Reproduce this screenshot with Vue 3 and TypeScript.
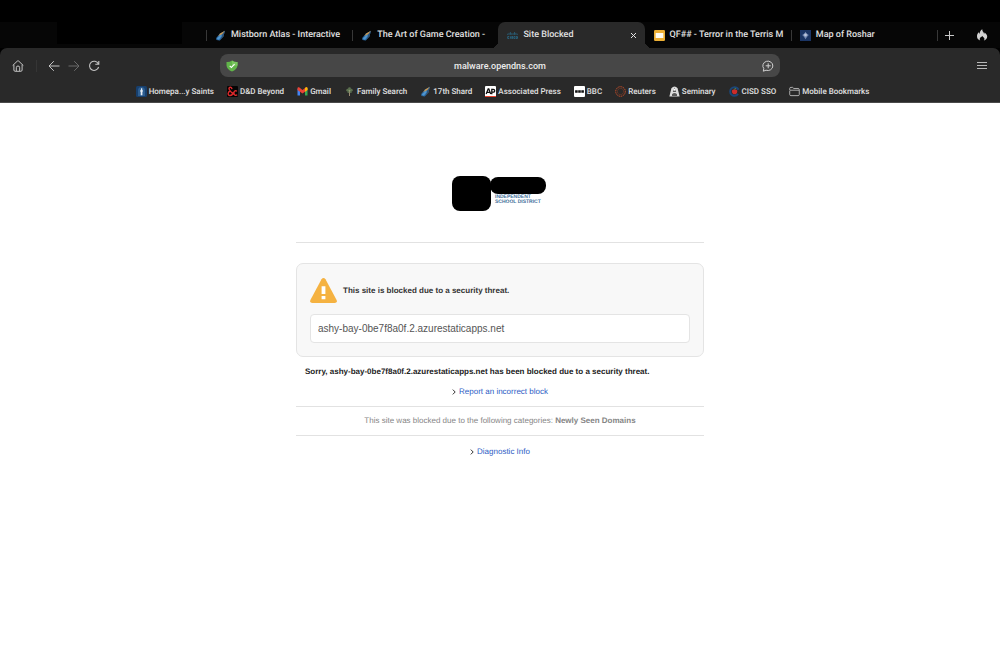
<script setup lang="ts">
interface Tab {
  title: string
  icon: string
  active?: boolean
}
interface Bookmark {
  label: string
  icon: string
}

const tabs: Tab[] = [
  { title: 'Mistborn Atlas - Interactive', icon: 'shard' },
  { title: 'The Art of Game Creation -', icon: 'shard' },
  { title: 'Site Blocked', icon: 'cisco', active: true },
  { title: 'QF## - Terror in the Terris M', icon: 'slides' },
  { title: 'Map of Roshar', icon: 'map' },
]

const bookmarks: Bookmark[] = [
  { label: 'Homepa...y Saints', icon: 'saints' },
  { label: 'D&D Beyond', icon: 'dnd' },
  { label: 'Gmail', icon: 'gmail' },
  { label: 'Family Search', icon: 'tree' },
  { label: '17th Shard', icon: 'shard' },
  { label: 'Associated Press', icon: 'ap' },
  { label: 'BBC', icon: 'bbc' },
  { label: 'Reuters', icon: 'reuters' },
  { label: 'Seminary', icon: 'seminary' },
  { label: 'CISD SSO', icon: 'cisd' },
  { label: 'Mobile Bookmarks', icon: 'folder' },
]

const domain = 'ashy-bay-0be7f8a0f.2.azurestaticapps.net'
</script>

<template>
  <div class="browser">
    <svg class="defs" width="0" height="0" aria-hidden="true">
      <symbol id="i-shard" viewBox="0 0 11 11">
        <path d="M10 .8 5 3.600 1.200 8 1.400 10 4.800 10.500 8.400 6.600Z" fill="#2d6ca6" />
        <path d="M10 .8 5.200 3.500 3.200 6.200 7 4.200Z" fill="#d99a45" />
        <path d="M10 .8 7.600 4.500 5.400 9.800 8.400 6.600Z" fill="#31506f" />
        <path d="M6 4.600 1.800 8.600 3.800 9.800 6.800 6Z" fill="#4f96d0" />
      </symbol>
      <symbol id="i-cisco" viewBox="0 0 12 11">
        <path d="M.7 3.600v1.200M2.200 2.600v2.200M3.700 1.800v3M5.200 3v1.800M6.700 3v1.800M8.200 1.800v3M9.700 2.600v2.200M11.200 3.600v1.200" stroke="#2b6f8e" stroke-width=".8" />
        <path d="M2.400 6.700H.8v2h1.600M3.700 6.400v2.600M6.600 6.700H5.100v1h1.200v1H4.800M9 6.700H7.500v2H9M9.900 6.700h1.500v2H9.900z" fill="none" stroke="#2b6f8e" stroke-width=".9" />
      </symbol>
      <symbol id="i-slides" viewBox="0 0 11 11">
        <rect width="11" height="11" rx="1.2" fill="#edb035" />
        <rect x="1.7" y="3" width="7.6" height="5" fill="#fffdf3" />
      </symbol>
      <symbol id="i-map" viewBox="0 0 11 11">
        <rect width="11" height="11" fill="#1b3565" />
        <path d="M5.500 1.800 6.600 3.500 8.800 5 7.100 6.700 5.500 9.200 4 6.700 2.200 5 4.500 3.500Z" fill="#7489b3" />
        <circle cx="5.500" cy="5" r="1.400" fill="#bac4da" />
      </symbol>
      <symbol id="i-saints" viewBox="0 0 11 11">
        <rect width="11" height="11" rx="1.500" fill="#173f6d" />
        <path d="M2 10V4.500a3.500 3.500 0 0 1 7 0V10z" fill="#2d5e91" />
        <path d="M5 2.200h1.200v1.300L7 5 6.400 6v3.300H4.700V6L4 4.900 5 3.500z" fill="#e6eef6" />
      </symbol>
      <symbol id="i-dnd" viewBox="0 0 11 11">
        <rect width="11" height="11" rx="1" fill="#050505" />
        <path d="M4.900 3.100C4.800.4 1.700.8 2 3c.2 1.300 3.200 3.800 4.400 5.700M3.300 5C.4 5.800.6 9.600 3 9.500c2 0 3-1.800 3.200-3.400M9.900 5.400C8.800 4.200 6.900 4.700 6.900 7c0 2.500 2.300 3 3.200 1.600" fill="none" stroke="#dc292b" stroke-width="1.400" />
      </symbol>
      <symbol id="i-gmail" viewBox="0 0 11 11">
        <path d="M.5 2.500v7H3V4.700z" fill="#4285f4" />
        <path d="M8 4.700v4.800h2.500v-7z" fill="#34a853" />
        <path d="M.5 4V2.400C.5 1.200 1.600 1 2.400 1.600L5.500 4l3.100-2.400c.8-.6 1.900-.4 1.900.8V4l-5 3.600z" fill="#ea4335" />
        <path d="M8 2.100 8.600 1.600c.8-.6 1.900-.4 1.900.8V4L8 5.800z" fill="#fbbc04" />
      </symbol>
      <symbol id="i-tree" viewBox="0 0 11 11">
        <path d="M5.500 4v6" stroke="#9a8c73" stroke-width="1" />
        <g fill="#5c7150">
          <circle cx="3.700" cy="4.200" r="1.400" /><circle cx="5.500" cy="2.700" r="1.400" /><circle cx="7.300" cy="4.200" r="1.400" /><circle cx="4.300" cy="6" r="1" /><circle cx="6.800" cy="6" r="1" />
        </g>
        <circle cx="5.500" cy="4.600" r=".9" fill="#8d9c72" />
      </symbol>
      <symbol id="i-ap" viewBox="0 0 11 11">
        <rect width="11" height="11" rx="1" fill="#fff" />
        <rect y="10" width="11" height="1" fill="#e6432f" />
        <path d="M1.200 8 3.200 2.800h.6L5.700 8M2 6.400h3M6.800 8.200V3.400h1.400c2 0 2 2.800 0 2.800H6.800" fill="none" stroke="#111" stroke-width="1.300" />
      </symbol>
      <symbol id="i-bbc" viewBox="0 0 11 11">
        <rect width="11" height="11" rx="1" fill="#fff" />
        <path d="M1.100 4.200h2.600v2.600H1.100zM4.200 4.200h2.600v2.600H4.200zM7.300 4.200h2.600v2.600H7.300z" fill="#111" />
      </symbol>
      <symbol id="i-reuters" viewBox="0 0 11 11">
        <circle cx="5.500" cy="5.500" r="4.800" fill="none" stroke="#d4532a" stroke-width="1" stroke-dasharray="1.200 .7" />
        <circle cx="5.500" cy="5.500" r="3.100" fill="none" stroke="#a84424" stroke-width=".8" stroke-dasharray=".9 1" />
      </symbol>
      <symbol id="i-seminary" viewBox="0 0 11 11">
        <path d="M.4 10.500 2.400 2.200Q5.500-1 8.600 2.200l2 8.300z" fill="#dedede" />
        <path d="M5.500 1.400 7.200 6H3.800zM3 8.200Q5.500 6 8 8.200V10H3z" fill="#5a5a5a" />
        <circle cx="5.500" cy="3.700" r="1" fill="#fff" />
      </symbol>
      <symbol id="i-cisd" viewBox="0 0 11 11">
        <circle cx="5.500" cy="5.500" r="4.300" fill="none" stroke="#1b4678" stroke-width="2" stroke-dasharray="22 5" stroke-dashoffset="-2.500" />
        <path d="M5.600 3.800C3.600 2.800 2.600 4.400 3 6c.4 1.700 1.500 2.600 2.600 2 1.100.6 2.300-.3 2.600-2 .4-1.600-.6-3.200-2.600-2.200z" fill="#cd2c2a" />
        <path d="M5.600 3.600 6.500 2" stroke="#5c9c47" />
      </symbol>
      <symbol id="i-folder" viewBox="0 0 12 11">
        <path d="M.8 4V2.200C.8 1.400 1.200 1 2 1h2l1.200 1.200H10c.8 0 1.200.5 1.200 1.200V8.800c0 .8-.5 1.200-1.200 1.200H2C1.200 10 .8 9.600.8 8.800V5c0-.6.4-.9 1-.9h9.400" fill="none" stroke="#c8c8c8" stroke-width=".9" />
      </symbol>
    </svg>

    <header class="chrome">
      <div class="tabbar">
        <div class="pinned"></div>
        <nav class="tabs" aria-label="Tabs">
          <div v-for="tab in tabs" :key="tab.title" class="tab" :class="{ active: tab.active }">
            <svg class="icon"><use :href="'#i-' + tab.icon" /></svg>
            <span class="tab-title">{{ tab.title }}</span>
            <button v-if="tab.active" class="close" aria-label="Close tab">
              <svg width="7" height="7" viewBox="0 0 7 7"><path d="m1 1 5 5m0-5L1 6" stroke="#e4e4e4" stroke-width="1" /></svg>
            </button>
          </div>
        </nav>
        <div class="tab-tools">
          <button aria-label="New tab">
            <svg width="9" height="9" viewBox="0 0 9 9"><path d="M4.500 0v9M0 4.500h9" stroke="#c8c8c8" /></svg>
          </button>
          <button aria-label="Clear data">
            <svg width="12" height="12" viewBox="0 0 12 12">
              <path d="M4.200 11.500C2.200 11 1 9.300 1 7.300c0-1.700.7-3 1.800-4 .1.800.4 1.300.8 1.500C3.600 3 4.600 1.300 6.300.300c-.1 1.600.7 2.300 1.300 3.300.3.500.4.900.4 1.300.4-.3.600-.9.600-1.500C10.200 4.600 11.200 6 11.200 7.600c0 2-1.400 3.500-3.400 3.900.6-.6.8-1.200.6-2C8 8.300 6.900 8 6.500 6.900 5.200 7.700 3.700 8.600 3.700 10c0 .6.200 1.100.5 1.500z" fill="#d2d2d2" />
            </svg>
          </button>
        </div>
      </div>

      <div class="toolbar">
        <div class="nav-left">
          <button class="home" aria-label="Home">
            <svg width="12" height="12" viewBox="0 0 12 12" fill="none" stroke="#c4c4c4">
              <path d="M.7 5.500 5.300 1.100q.7-.6 1.400 0L11.300 5.500M1.900 4.800v5.200c0 .8.400 1.300 1.200 1.300h5.800c.8 0 1.200-.5 1.200-1.300V4.800M4.300 11V7.700a1.700 1.700 0 0 1 3.400 0V11" />
            </svg>
          </button>
          <button aria-label="Back">
            <svg width="12" height="12" viewBox="0 0 12 12"><path d="M11.500 6H1M5.800 1.200 1 6l4.800 4.800" fill="none" stroke="#c4c4c4" /></svg>
          </button>
          <button aria-label="Forward">
            <svg width="12" height="12" viewBox="0 0 12 12"><path d="M.500 6H11M6.200 1.200 11 6l-4.800 4.800" fill="none" stroke="#6b6b6b" /></svg>
          </button>
          <button aria-label="Reload">
            <svg width="12" height="12" viewBox="0 0 12 12"><path d="M10.300 3.800A4.600 4.600 0 1 0 10.600 7M10.800.900v3.400H7.300" fill="none" stroke="#c4c4c4" stroke-width="1.100" /></svg>
          </button>
        </div>
        <div class="address">
          <svg width="12" height="12" viewBox="0 0 12 12">
            <path d="M6 .500Q8.500 2.300 11.500 2v3.500Q11 9.700 6 11.500 1 9.700.500 5.500V2Q3.500 2.300 6 .500z" fill="#61b44a" />
            <path d="M6 .500Q8.500 2.300 11.500 2v3.500L6 6z" fill="#79c65e" />
            <path d="m3.700 5.800 1.700 1.700 3.200-3.300" fill="none" stroke="#fff" stroke-width="1.100" />
          </svg>
          <input type="text" value="malware.opendns.com" aria-label="Address" />
          <button aria-label="Start chat">
            <svg width="12" height="12" viewBox="0 0 12 12" fill="none" stroke="#d0d0d0">
              <path d="M1.300 11.200 1.800 8.600A5 4.700 0 1 1 4 10.200zM6.200 3.300v5M3.700 5.800h5" />
            </svg>
          </button>
        </div>
        <div class="nav-right">
          <button aria-label="Menu">
            <svg width="10" height="9" viewBox="0 0 10 9"><path d="M0 1.500h10M0 4.500h10M0 7.500h10" stroke="#b9b9b9" /></svg>
          </button>
        </div>
      </div>

      <nav class="bookmarks" aria-label="Bookmarks">
        <a v-for="b in bookmarks" :key="b.label" href="#">
          <svg class="icon"><use :href="'#i-' + b.icon" /></svg>
          <span>{{ b.label }}</span>
        </a>
      </nav>
    </header>

    <main class="page">
      <div class="logo">
        <div class="crest"></div>
        <div class="wordmark">
          <div class="name"></div>
          <div class="district">INDEPENDENT<br />SCHOOL DISTRICT</div>
        </div>
      </div>
      <section class="card">
        <div class="warning">
          <svg width="27" height="25" viewBox="0 0 27 25">
            <path d="M11.500 1.200q2-2.200 4 0L26.600 22q1 3-2 3H2.400q-3 0-2-3z" fill="#f5b241" />
            <path d="M11.600 8.200h3.800V16h-3.800zM11.600 18h3.800v3.200h-3.800z" fill="#fff" />
          </svg>
          <label for="blocked">This site is blocked due to a security threat.</label>
        </div>
        <input id="blocked" type="text" readonly :value="domain" />
      </section>
      <p class="sorry">Sorry, {{ domain }} has been blocked due to a security threat.</p>
      <p class="more">
        <svg width="4" height="6" viewBox="0 0 4 6"><path d="m.8.6 2.400 2.400L.8 5.400" fill="none" stroke="#333" /></svg>
        <a href="#">Report an incorrect block</a>
      </p>
      <p class="category">This site was blocked due to the following categories: <b>Newly Seen Domains</b></p>
      <p class="more">
        <svg width="4" height="6" viewBox="0 0 4 6"><path d="m.8.6 2.400 2.400L.8 5.400" fill="none" stroke="#333" /></svg>
        <a href="#">Diagnostic Info</a>
      </p>
    </main>
  </div>
</template>

<style>
body {
  margin: 0;
  background: #fff;
}
</style>

<style scoped>
* {
  box-sizing: border-box;
}
.browser {
  min-height: 100vh;
  font-family: Roboto, "Liberation Sans", sans-serif;
  text-rendering: geometricPrecision;
}
.defs {
  position: absolute;
}
button {
  display: flex;
  padding: 0;
  border: 0;
  background: none;
}
.icon {
  flex: none;
  width: 11px;
  height: 11px;
}
.chrome {
  background: #000;
  color: #e0e0e0;
}
.tabbar {
  display: flex;
  height: 48px;
  padding-top: 22px;
  background: linear-gradient(#000 22px, #060606 22px);
}
.pinned {
  width: 125px;
  height: 22px;
  margin: 0 24px 0 57px;
  background: #000;
}
.tabs {
  flex: 1;
  display: flex;
  min-width: 0;
}
.tab {
  position: relative;
  flex: 1 1 0;
  min-width: 0;
  display: flex;
  align-items: center;
  gap: 5px;
  padding: 0 5px 0 9px;
  font-size: 9px;
  font-weight: 500;
  line-height: 25px;
}
.tab::before {
  content: "";
  position: absolute;
  left: 0;
  top: 8px;
  width: 1px;
  height: 11px;
  background: #383838;
}
.tab-title {
  flex: 1;
  padding-top: 1px;
  white-space: nowrap;
}
.tab.active {
  background: #292929;
  border-radius: 7px 7px 0 0;
}
.tab.active::before,
.tab.active::after {
  content: "";
  position: absolute;
  top: auto;
  bottom: 0;
  width: 7px;
  height: 7px;
}
.tab.active::before {
  left: -7px;
  background: radial-gradient(circle at 0 0, transparent 7px, #292929 7px);
}
.tab.active::after {
  right: -7px;
  background: radial-gradient(circle at 100% 0, transparent 7px, #292929 7px);
}
.tab.active + .tab::before {
  display: none;
}
.close {
  margin-right: 3px;
}
.tab-tools {
  display: flex;
  align-items: center;
  justify-content: space-between;
  width: 63px;
  padding: 0 12px 0 8px;
  position: relative;
}
.tab-tools::before {
  content: "";
  position: absolute;
  left: 0;
  top: 8px;
  width: 1px;
  height: 11px;
  background: #383838;
}
.toolbar {
  display: grid;
  grid-template-columns: 1fr 56% 1fr;
  align-items: center;
  height: 35px;
  background: #292929;
  border-radius: 7px 7px 0 0;
}
.nav-left {
  display: flex;
  gap: 8px;
  padding-left: 12px;
}
.home {
  padding-right: 12px;
  margin-right: 3px;
  border-right: 1px solid #353535;
}
.nav-right {
  display: flex;
  justify-content: flex-end;
  padding-right: 13px;
}
.address {
  display: flex;
  align-items: center;
  height: 23px;
  padding: 0 6px;
  border-radius: 8px;
  background: #474747;
}
.address input {
  flex: 1;
  min-width: 0;
  padding: 0;
  border: 0;
  background: none;
  color: #ececec;
  font: 500 9px Roboto, sans-serif;
  text-align: center;
}
.bookmarks {
  display: flex;
  align-items: center;
  justify-content: center;
  gap: 13px;
  height: 20px;
  padding-bottom: 2px;
  padding-left: 5px;
  border-bottom: 1px solid #4a4a4a;
  background: #292929;
  white-space: nowrap;
}
.bookmarks a {
  display: flex;
  align-items: center;
  gap: 2px;
  color: #e0e0e0;
  font-size: 8px;
  font-weight: 500;
  line-height: 10px;
  text-decoration: none;
}
.bookmarks span {
  padding-top: 1px;
}
.page {
  max-width: 408px;
  margin: 0 auto;
  padding-top: 73px;
  color: #222;
  font-family: "Liberation Sans", Arial, sans-serif;
  font-size: 8px;
  line-height: 12px;
}
.logo {
  display: flex;
  justify-content: center;
  height: 67px;
  padding-right: 2px;
  border-bottom: 1px solid #e2e2e2;
}
.crest {
  width: 39px;
  height: 35px;
  border-radius: 8px;
  background: #000;
}
.wordmark {
  padding-top: 1px;
}
.name {
  width: 56px;
  height: 17px;
  margin-left: -1px;
  border-radius: 8px;
  background: #000;
}
.district {
  padding: 1px 0 0 4px;
  color: #41709b;
  font-size: 5px;
  font-weight: 700;
  line-height: 5px;
}
.card {
  margin-top: 20px;
  padding: 14px 13px 13px;
  border: 1px solid #e4e4e4;
  border-radius: 7px;
  background: #f8f8f8;
}
.warning {
  display: flex;
  align-items: center;
  gap: 6px;
  font-weight: 700;
  color: #333;
}
.card input {
  display: block;
  width: 100%;
  height: 29px;
  margin-top: 11px;
  padding: 0 7px;
  border: 1px solid #e4e4e4;
  border-radius: 4px;
  background: #fff;
  color: #555;
  font: 10px "Liberation Sans", Arial, sans-serif;
}
.sorry {
  margin: 9px 0 0 9px;
  font-weight: 700;
}
.more {
  display: flex;
  align-items: center;
  justify-content: center;
  gap: 3px;
  margin: 8px 0;
}
.more a {
  color: #2c5cc5;
  text-decoration: none;
}
.category {
  margin: 0 0 10px;
  padding: 8px 0;
  border: solid #e2e2e2;
  border-width: 1px 0;
  color: #858585;
  text-align: center;
}
</style>
